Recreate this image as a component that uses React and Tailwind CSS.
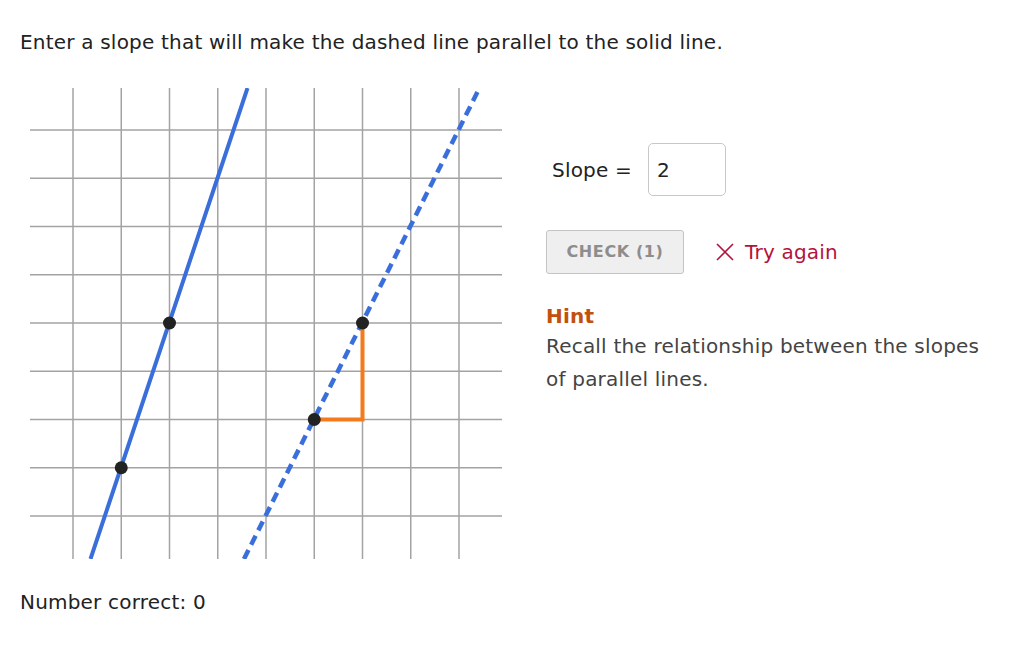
import React from 'react';

const X0 = 43;
const Y0 = 42;
const U = 48.25;

const Graph = () => {
    const xs = [0, 1, 2, 3, 4, 5, 6, 7, 8].map((k) => X0 + U * k);
    const ys = [0, 1, 2, 3, 4, 5, 6, 7, 8].map((k) => Y0 + U * k);

    return (
        <svg width="472" height="471" viewBox="0 0 472 471" className="block">
            {xs.map((x) => (
                <line key={'v' + x} x1={x} y1="0" x2={x} y2="471" stroke="#a3a3a3" strokeWidth="1.5" />
            ))}
            {ys.map((y) => (
                <line key={'h' + y} x1="0" y1={y} x2="472" y2={y} stroke="#a3a3a3" strokeWidth="1.5" />
            ))}
            {/* solid line through (1,7) and (2,4) */}
            <line x1="60.5" y1="471" x2="217.5" y2="0" stroke="#3a6fdb" strokeWidth="4" />
            {/* dashed line, slope 2 */}
            <line x1="214" y1="471" x2="451" y2="-3" stroke="#3a6fdb" strokeWidth="4.5" strokeDasharray="10 6" />
            {/* run / rise */}
            <polyline
                points={`${xs[5]},${ys[6]} ${xs[6]},${ys[6]} ${xs[6]},${ys[4]}`}
                fill="none"
                stroke="#f47a1c"
                strokeWidth="4"
            />
            <circle cx={xs[1]} cy={ys[7]} r="6.5" fill="#222" />
            <circle cx={xs[2]} cy={ys[4]} r="6.5" fill="#222" />
            <circle cx={xs[5]} cy={ys[6]} r="6.5" fill="#222" />
            <circle cx={xs[6]} cy={ys[4]} r="6.5" fill="#222" />
        </svg>
    );
};

const App = () => {
    return (
        <div className="min-h-screen bg-white text-[#222] text-[20px] tracking-[0.2px] font-['DejaVu_Sans',sans-serif]">
            <div className="px-5 pt-[28px]">
                <p className="leading-7">Enter a slope that will make the dashed line parallel to the solid line.</p>

                <div className="flex mt-[32px] pl-[10px]">
                    <Graph />

                    <div className="ml-[44px] w-[438px] pt-[55px]">
                        <div className="flex items-center pl-[6px]">
                            <span>Slope =</span>
                            <div className="ml-[16px] w-[78px] h-[53px] border border-[#c8c8c8] rounded-[5px] flex items-center px-2">
                                2
                            </div>
                        </div>

                        <div className="flex items-center mt-[34px]">
                            <button className="w-[138px] h-[44px] bg-[#efefef] border border-[#c4c4c4] rounded-[3px] text-[#8d8d8d] text-[16px] font-bold tracking-[0.6px]">
                                CHECK (1)
                            </button>
                            <span className="ml-[31px] text-[#b3123c] flex items-center">
                                <svg width="20" height="20" viewBox="0 0 20 20" className="mr-[10px]">
                                    <path d="M2 2 L18 18 M18 2 L2 18" stroke="#b3123c" strokeWidth="1.6" fill="none" />
                                </svg>
                                Try again
                            </span>
                        </div>

                        <div className="mt-[28px] text-[#c2510c] font-bold leading-7">Hint</div>
                        <p className="text-[#444] leading-[33px]">
                            Recall the relationship between the slopes of parallel lines.
                        </p>
                    </div>
                </div>

                <p className="mt-[28px]">Number correct: 0</p>
            </div>
        </div>
    );
};

export default App;
